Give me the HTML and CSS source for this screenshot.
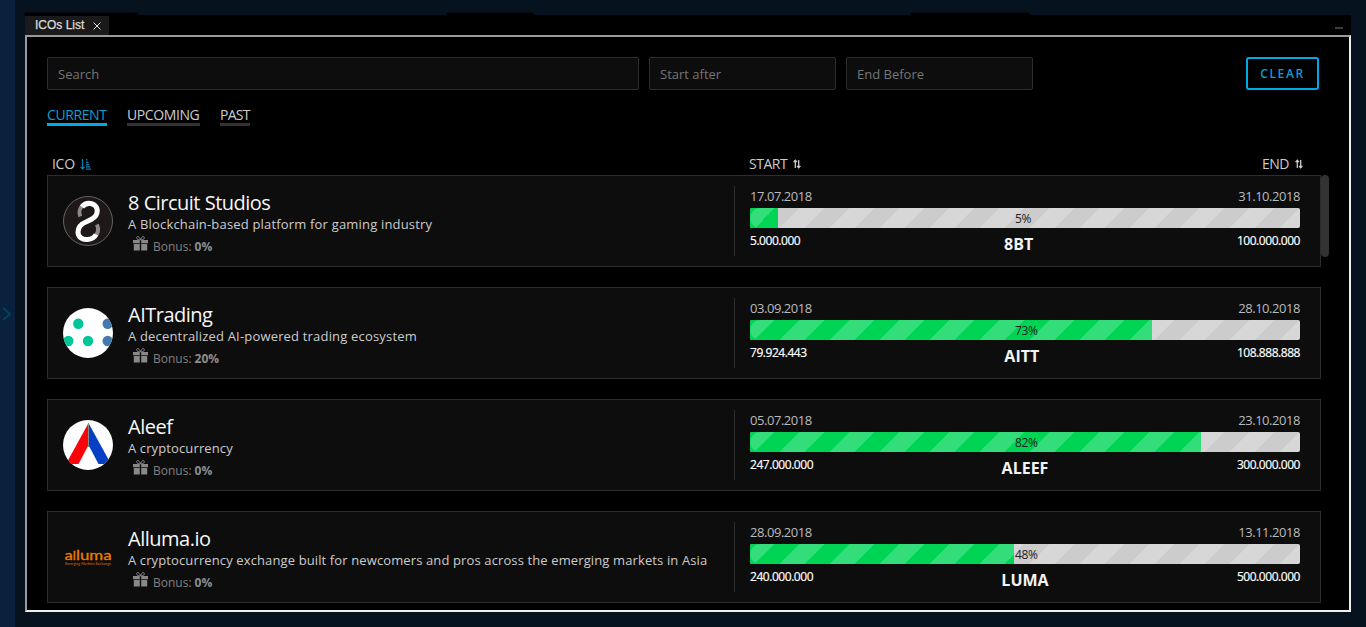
FILE: index.html
```html
<!DOCTYPE html>
<html lang="en">
<head>
<meta charset="utf-8">
<title>ICOs List</title>
<link rel="stylesheet" href="styles.css">
</head>
<body>
<svg class="defs" width="0" height="0" aria-hidden="true">
  <symbol id="gift" viewBox="0 0 15 15">
    <path d="M0 4h6.8v3.2H0zM8.2 4H15v3.2H8.2zM.8 8h6v6.5h-6zM8.2 8h6v6.5h-6z" fill="currentColor"/>
    <path d="M7.2 4C5.5 4 3.4 3 3.6 1.6 3.8.4 5.4.2 6.2 1.3 6.8 2.1 7.2 3 7.5 4 7.8 3 8.2 2.1 8.8 1.3 9.6.2 11.2.4 11.4 1.6 11.6 3 9.500 4 7.800 4" fill="none" stroke="currentColor" stroke-width="1"/>
  </symbol>
  <symbol id="sort" viewBox="0 0 8 10">
    <path d="M2.300 9V1.500M.6 3.200 2.300 1.200 4 3.200M5.700 1v7.500M4 6.800l1.700 2 1.700-2" fill="none" stroke="currentColor" stroke-width="1.300"/>
  </symbol>
</svg>
<aside class="rail"><svg width="9" height="14" viewBox="0 0 9 14"><path d="M1 1l7 6-7 6" fill="none" stroke="#06405f" stroke-width="2"/></svg></aside>
<main class="window">
  <header class="titlebar">
    <i class="bump bump-a"></i><i class="bump bump-b"></i><i class="bump bump-c"></i>
    <div class="tab"><span>ICOs List</span><svg width="8" height="8" viewBox="0 0 8 8"><path d="M.5.5l7 7M7.500.5l-7 7" stroke="#ddd" stroke-width="1"/></svg></div>
    <i class="minimize"></i>
  </header>
  <section class="panel">
    <div class="filters">
      <div class="field search">Search</div>
      <div class="field date">Start after</div>
      <div class="field date">End Before</div>
      <button class="clear">CLEAR</button>
    </div>
    <nav class="periods"><a class="active">CURRENT</a><a class="up">UPCOMING</a><a class="past">PAST</a></nav>
    <div class="columns">
      <div class="col-ico">ICO <svg width="11" height="11" viewBox="0 0 11 11"><path d="M2.500 0v9.500M.5 7.800l2 2 2-2M6 .9h1.500M6 3.300h2.500M6 5.600h3M6 7.900h4M6 10.200h5" fill="none" stroke="#0b7fae" stroke-width="1.200"/></svg></div>
      <div class="col-start">START <svg width="8" height="10"><use href="#sort"/></svg></div>
      <div class="col-end">END <svg width="8" height="10"><use href="#sort"/></svg></div>
    </div>
    <div class="list">
      <article class="card">
        <svg class="logo" viewBox="0 0 50 50">
          <circle cx="25" cy="25" r="24.500" fill="#1e1819" stroke="#777" stroke-width=".8"/>
          <path d="M17.200 20.500C15.500 16 17 11.500 20 9M34 28.500c2 4.500 1 9-2.500 12.500" fill="none" stroke="#8d898a" stroke-width="4"/>
          <path d="M19 11c2-3 5-4 8.500-3.500 5 .8 7.500 4.500 6.500 9.500-1 4.500-5 6.500-10 8.500s-9 5-9 10.500c0 5 4 8 9.500 7.500 3.500-.3 7-2 8.500-5" fill="none" stroke="#fff" stroke-width="5"/>
        </svg>
        <div class="info"><h2>8 Circuit Studios</h2><p class="wide">A Blockchain-based platform for gaming industry</p><div class="bonus"><svg width="15" height="15"><use href="#gift"/></svg>Bonus: <b>0%</b></div></div>
        <div class="sale">
          <div class="ends dates"><span>17.07.2018</span><span>31.10.2018</span></div>
          <div class="bar"><div class="fill" style="width:5%"></div><span class="pct">5%</span></div>
          <div class="ends amounts"><span>5.000.000</span><strong>8BT</strong><span>100.000.000</span></div>
        </div>
      </article>
      <article class="card">
        <svg class="logo round" viewBox="0 0 50 50"><rect width="50" height="50" fill="#fff"/><g fill="#00c49a"><circle cx="15.300" cy="15.700" r="5.200"/><circle cx="5.300" cy="33" r="5.200"/><circle cx="25" cy="33" r="5.200"/></g><g fill="#447bac"><circle cx="44.700" cy="15.700" r="5.200"/><circle cx="44.700" cy="33" r="5.200"/></g></svg>
        <div class="info"><h2>AITrading</h2><p class="wide">A decentralized AI-powered trading ecosystem</p><div class="bonus"><svg width="15" height="15"><use href="#gift"/></svg>Bonus: <b>20%</b></div></div>
        <div class="sale">
          <div class="ends dates"><span>03.09.2018</span><span>28.10.2018</span></div>
          <div class="bar"><div class="fill" style="width:73%"></div><span class="pct">73%</span></div>
          <div class="ends amounts"><span>79.924.443</span><strong>AITT</strong><span>108.888.888</span></div>
        </div>
      </article>
      <article class="card">
        <svg class="logo round" viewBox="0 0 50 50"><rect width="50" height="50" fill="#fff"/><path d="M25 4v22l-9.500 18H3z" fill="#fe0009"/><path d="M26 4v22l9.500 18H48z" fill="#0540c3"/><path d="M25.500 3v24" stroke="#888" stroke-width="1"/></svg>
        <div class="info"><h2>Aleef</h2><p>A cryptocurrency</p><div class="bonus"><svg width="15" height="15"><use href="#gift"/></svg>Bonus: <b>0%</b></div></div>
        <div class="sale">
          <div class="ends dates"><span>05.07.2018</span><span>23.10.2018</span></div>
          <div class="bar"><div class="fill" style="width:82%"></div><span class="pct">82%</span></div>
          <div class="ends amounts"><span>247.000.000</span><strong>ALEEF</strong><span>300.000.000</span></div>
        </div>
      </article>
      <article class="card">
        <svg class="logo" viewBox="0 0 50 50"><text class="alluma" x="1.500" y="28" textLength="47" lengthAdjust="spacingAndGlyphs">a<tspan class="short">l</tspan>luma</text><text class="alluma-sub" x="2" y="32.500" textLength="46" lengthAdjust="spacingAndGlyphs">Emerging Markets Exchange</text></svg>
        <div class="info"><h2>Alluma.io</h2><p>A cryptocurrency exchange built for newcomers and pros across the emerging markets in Asia</p><div class="bonus"><svg width="15" height="15"><use href="#gift"/></svg>Bonus: <b>0%</b></div></div>
        <div class="sale">
          <div class="ends dates"><span>28.09.2018</span><span>13.11.2018</span></div>
          <div class="bar"><div class="fill" style="width:48%"></div><span class="pct">48%</span></div>
          <div class="ends amounts"><span>240.000.000</span><strong>LUMA</strong><span>500.000.000</span></div>
        </div>
      </article>
      <i class="scroll-thumb"></i>
    </div>
  </section>
</main>
</body>
</html>
```
FILE: styles.css
```css
* { box-sizing: border-box; }
body { margin: 0; height: 627px; overflow: hidden; display: flex; background: #06121d; font-family: "Open Sans", sans-serif; color: #ccc; }
.defs { position: absolute; }
.rail { width: 15px; height: 627px; flex: none; background: #09213d; display: flex; align-items: center; padding-left: 2px; }
.window { width: 1326px; margin: 15px 0 0 10px; height: 597px; background: #000; flex: none; }
.titlebar { position: relative; height: 20px; display: flex; justify-content: space-between; }
.bump { position: absolute; top: -2px; height: 4px; background: #000; box-shadow: 0 0 2px #000; }
.bump-a { left: 0; width: 113px; }
.bump-b { left: 422px; width: 86px; }
.bump-c { left: 886px; width: 118px; }
.tab { position: relative; width: 84px; height: 19px; margin-top: 1px; padding-left: 10px; background: #1a1a1a; color: #ddd; font: 12px/18px "Liberation Sans", Arial, sans-serif; -webkit-text-stroke: .25px #ddd; display: flex; align-items: center; gap: 9px; white-space: nowrap; }
.tab span { margin-top: -1px; }
.tab svg { margin-top: 0; }
.minimize { width: 8px; height: 2px; margin: 12px 8px 0 0; background: #3c3c3c; }
.panel { height: 577px; border: 2px solid; border-color: #9a9a9a #eee #eee #9a9a9a; padding: 20px 20px 0; overflow: hidden; }
.filters { display: flex; gap: 10px; height: 33px; padding-right: 10px; }
.field { height: 33px; border: 1px solid #2d2d2d; border-radius: 2px; background: #0d0d0d; color: #757575; font-size: 13px; line-height: 32px; padding-left: 10px; }
.search { width: 592px; }
.date { width: 187px; }
.clear { margin-left: auto; width: 73px; height: 33px; padding: 0; border: 2px solid #00aae4; border-radius: 3px; background: #000; color: #0a9fd2; font: 600 12px/29px "Open Sans", sans-serif; letter-spacing: 1.6px; }
.periods { display: flex; gap: 20px; margin-top: 15px; height: 21px; font-size: 14px; line-height: 20px; white-space: nowrap; }
.periods a { height: 21px; border-bottom: 3px solid #333; }
.periods .active { width: 60px; color: #0a9fd2; border-color: #00aae4; letter-spacing: -.4px; }
.up { width: 73px; letter-spacing: -.4px; }
.past { width: 30px; letter-spacing: -.7px; }
.columns { display: grid; grid-template-columns: 697px 1fr auto; margin-top: 27px; height: 22px; padding: 0 26px 0 5px; font-size: 14px; line-height: 21px; letter-spacing: -.5px; }
.columns svg { margin-left: 3px; }
.columns .col-ico svg { vertical-align: -1px; margin-left: 2px; }
.col-ico { letter-spacing: -.3px; }
.list { position: relative; display: grid; gap: 20px; width: 1274px; }
.card { height: 92px; display: flex; border: 1px solid #2d2d2d; background: #0d0d0d; padding: 10px 20px 10px 15px; }
.logo { width: 50px; height: 50px; margin-top: 10px; flex: none; }
.round { border-radius: 50%; }
.info { width: 622px; padding: 3px 0 0 15px; border-right: 1px solid #2d2d2d; white-space: nowrap; height: 70px; }
h2 { margin: 0; color: #f7f7f7; font-size: 20px; line-height: 28px; height: 27px; font-weight: 400; letter-spacing: -.5px; }
p { margin: 0; font-size: 13px; line-height: 16px; color: #ccc; letter-spacing: .12px; }
.wide { letter-spacing: .18px; }
.bonus { display: flex; height: 28px; margin: 0 0 0 5px; align-items: center; font-size: 12px; color: #808080; }
.bonus svg { margin: -5px 5px 0 0; color: #888; }
.bonus b { margin-left: 3px; color: #8e8e8e; }
.sale { width: 550px; margin-left: 15px; }
.ends { display: flex; justify-content: space-between; }
.dates { height: 22px; font-size: 13px; line-height: 21px; letter-spacing: -.45px; color: #bbb; }
.bar { position: relative; height: 20px; border-radius: 2px; overflow: hidden; background-color: #ccc; background-image: linear-gradient(135deg, #d7d7d7 25%, transparent 25% 50%, #d7d7d7 50% 75%, transparent 75%); background-size: 50px 50px; }
.fill { height: 20px; background: #00d455; }
.fill::before { content: ""; display: block; height: 20px; border-radius: 10px 0 0 10px; background: linear-gradient(135deg, #33dd7a 25%, transparent 25% 50%, #33dd7a 50% 75%, transparent 75%) 0 0 / 50px 50px; }
.pct { position: absolute; left: 265px; top: 0; color: #222; font-size: 12px; line-height: 21px; letter-spacing: -.4px; }
.amounts { height: 28px; font-size: 12px; line-height: 25px; letter-spacing: -.45px; -webkit-text-stroke: .2px #fff; color: #fff; }
.amounts strong { font-size: 16px; line-height: 32px; letter-spacing: 0; color: #f3f3f3; -webkit-text-stroke: 0; }
.scroll-thumb { position: absolute; left: 1274px; top: 0; width: 8px; height: 82px; border-radius: 4px; background: #333; }
.alluma { fill: #ef7d00; font: 400 14px Lato, sans-serif; stroke: #ef7d00; stroke-width: .3px; }
.alluma .short { font-size: 11px; }
.alluma-sub { fill: #a85a08; font: 700 3.5px Lato, sans-serif; }
```
